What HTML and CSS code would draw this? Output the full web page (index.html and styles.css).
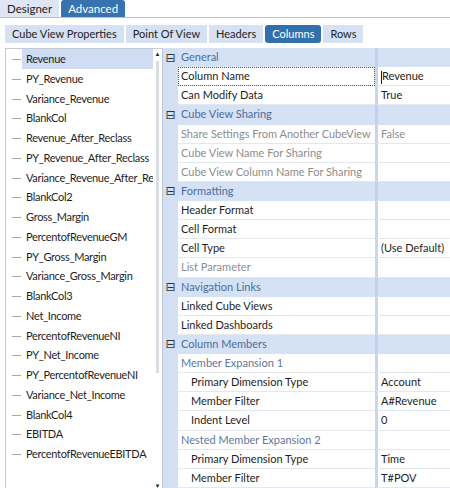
FILE: index.html
```html
<!DOCTYPE html>
<html>
<head>
<meta charset="utf-8">
<link rel="stylesheet" href="styles.css">
</head>
<body>
<div class="topbar">
  <div class="ttab">Designer</div>
  <div class="ttab active">Advanced</div>
</div>
<div class="subtabs">
  <div class="stab">Cube View Properties</div>
  <div class="stab">Point Of View</div>
  <div class="stab">Headers</div>
  <div class="stab active">Columns</div>
  <div class="stab">Rows</div>
</div>
<div class="content">
  <div class="listbox">
    <ul class="list">
      <li class="sel">Revenue</li>
      <li>PY_Revenue</li>
      <li>Variance_Revenue</li>
      <li>BlankCol</li>
      <li>Revenue_After_Reclass</li>
      <li>PY_Revenue_After_Reclass</li>
      <li>Variance_Revenue_After_Reclass</li>
      <li>BlankCol2</li>
      <li>Gross_Margin</li>
      <li>PercentofRevenueGM</li>
      <li>PY_Gross_Margin</li>
      <li>Variance_Gross_Margin</li>
      <li>BlankCol3</li>
      <li>Net_Income</li>
      <li>PercentofRevenueNI</li>
      <li>PY_Net_Income</li>
      <li>PY_PercentofRevenueNI</li>
      <li>Variance_Net_Income</li>
      <li>BlankCol4</li>
      <li>EBITDA</li>
      <li>PercentofRevenueEBITDA</li>
    </ul>
    <div class="vscroll">
      <span class="arrow">&#9650;</span>
      <div class="track"><div class="thumb"></div></div>
      <span class="arrow">&#9660;</span>
    </div>
  </div>
  <div class="grid">
    <div class="row cat"><div class="gut"><span class="box">&#8863;</span></div><div class="nm">General</div><div class="vl"></div></div>
    <div class="row"><div class="gut"></div><div class="nm focus">Column Name</div><div class="vl"><span class="caret"></span>Revenue</div></div>
    <div class="row"><div class="gut"></div><div class="nm">Can Modify Data</div><div class="vl">True</div></div>
    <div class="row cat"><div class="gut"><span class="box">&#8863;</span></div><div class="nm">Cube View Sharing</div><div class="vl"></div></div>
    <div class="row dis"><div class="gut"></div><div class="nm">Share Settings From Another CubeView</div><div class="vl">False</div></div>
    <div class="row dis"><div class="gut"></div><div class="nm">Cube View Name For Sharing</div><div class="vl"></div></div>
    <div class="row dis"><div class="gut"></div><div class="nm">Cube View Column Name For Sharing</div><div class="vl"></div></div>
    <div class="row cat"><div class="gut"><span class="box">&#8863;</span></div><div class="nm">Formatting</div><div class="vl"></div></div>
    <div class="row"><div class="gut"></div><div class="nm">Header Format</div><div class="vl"></div></div>
    <div class="row"><div class="gut"></div><div class="nm">Cell Format</div><div class="vl"></div></div>
    <div class="row"><div class="gut"></div><div class="nm">Cell Type</div><div class="vl">(Use Default)</div></div>
    <div class="row dis"><div class="gut"></div><div class="nm">List Parameter</div><div class="vl"></div></div>
    <div class="row cat"><div class="gut"><span class="box">&#8863;</span></div><div class="nm">Navigation Links</div><div class="vl"></div></div>
    <div class="row"><div class="gut"></div><div class="nm">Linked Cube Views</div><div class="vl"></div></div>
    <div class="row"><div class="gut"></div><div class="nm">Linked Dashboards</div><div class="vl"></div></div>
    <div class="row cat"><div class="gut"><span class="box">&#8863;</span></div><div class="nm">Column Members</div><div class="vl"></div></div>
    <div class="row sub"><div class="gut"></div><div class="nm">Member Expansion 1</div><div class="vl"></div></div>
    <div class="row ind"><div class="gut"></div><div class="nm">Primary Dimension Type</div><div class="vl">Account</div></div>
    <div class="row ind"><div class="gut"></div><div class="nm">Member Filter</div><div class="vl">A#Revenue</div></div>
    <div class="row ind"><div class="gut"></div><div class="nm">Indent Level</div><div class="vl">0</div></div>
    <div class="row sub"><div class="gut"></div><div class="nm">Nested Member Expansion 2</div><div class="vl"></div></div>
    <div class="row ind"><div class="gut"></div><div class="nm">Primary Dimension Type</div><div class="vl">Time</div></div>
    <div class="row ind"><div class="gut"></div><div class="nm">Member Filter</div><div class="vl">T#POV</div></div>
  </div>
</div>
</body>
</html>
```
FILE: styles.css
```css
* { box-sizing: border-box; }
html, body { margin: 0; padding: 0; }
body {
  width: 450px;
  height: 488px;
  overflow: hidden;
  background: #ffffff;
  font-family: "Lato", "Open Sans", sans-serif;
  font-size: 11px;
  color: #1e1e1e;
}
.topbar {
  display: flex;
  height: 18px;
  border-bottom: 1px solid #b4c3da;
  gap: 2px;
}
.ttab {
  height: 17px;
  line-height: 17px;
  padding: 0 7px;
  background: #dde6f2;
  color: #222;
  font-size: 11.5px;
}
.ttab.active {
  background: #3872b0;
  color: #fff;
  border-radius: 3px 3px 0 0;
}
.subtabs {
  display: flex;
  margin: 7px 0 0 5px;
  height: 18px;
  gap: 2px;
}
.stab {
  height: 18px;
  line-height: 18px;
  padding: 0 7px;
  background: #d6e2f3;
  font-size: 11px;
  color: #222;
}
.stab.active {
  background: #3170ad;
  color: #fff;
  border-radius: 3px;
}
.content {
  display: flex;
  margin-top: 5px;
  height: 444px;
}
.listbox {
  display: flex;
  width: 158px;
  margin-left: 5px;
  border: 1px solid #c3ccd8;
  border-right: none;
  background: #fff;
}
.list {
  list-style: none;
  margin: 0;
  padding: 0;
  width: 148px;
  overflow: hidden;
}
.list li {
  position: relative;
  height: 19.75px;
  line-height: 19.75px;
  padding-left: 20px;
  white-space: nowrap;
  overflow: hidden;
  letter-spacing: -0.3px;
}
.list li::before {
  content: "";
  position: absolute;
  left: 6px;
  top: 10px;
  width: 9px;
  border-top: 1px solid #a8a8a8;
}
.list li.sel {
  background: linear-gradient(to right, transparent 16px, #cfdcf3 16px);
}
.vscroll {
  width: 10px;
  display: flex;
  flex-direction: column;
  align-items: center;
  border-right: 1px solid #b9c6da;
}
.arrow {
  font-size: 6px;
  line-height: 10px;
  height: 10px;
  color: #222;
}
.track {
  flex: 1;
  width: 100%;
  display: flex;
  justify-content: center;
}
.thumb {
  width: 3px;
  height: 312px;
  margin-top: 2px;
  background: #dadde2;
}
.grid {
  flex: 1;
  background: #d3dff3;
  overflow: hidden;
}
.row {
  display: flex;
  height: 19.14px;
  line-height: 18px;
  white-space: nowrap;
}
.gut {
  width: 15px;
  flex: none;
  display: flex;
  align-items: center;
  justify-content: center;
}
.box {
  font-size: 12px;
  line-height: 12px;
  color: #333;
  font-family: "DejaVu Sans", sans-serif;
}
.nm {
  width: 197px;
  flex: none;
  padding-left: 3px;
  background: #fff;
  border-bottom: 1px solid #e4e8ee;
  overflow: hidden;
}
.vl {
  flex: 1;
  padding-left: 3px;
  background: #fff;
  border-bottom: 1px solid #e4e8ee;
  border-left: 3px solid #c9d5ea;
  overflow: hidden;
}
.row.cat .nm, .row.cat .vl {
  background: #d5e1f5;
  border-bottom-color: #d5e1f5;
  color: #4c6d9c;
}
.row.cat .vl { border-left-color: #c2d0e8; }
.row.dis .nm, .row.dis .vl { color: #8d8d8d; }
.row.sub .nm { color: #60789c; }
.row.ind .nm { padding-left: 13px; }
.nm.focus { outline: 1px dotted #555; outline-offset: -1px; }
.caret {
  display: inline-block;
  width: 1px;
  height: 13px;
  background: #222;
  vertical-align: middle;
}
```
